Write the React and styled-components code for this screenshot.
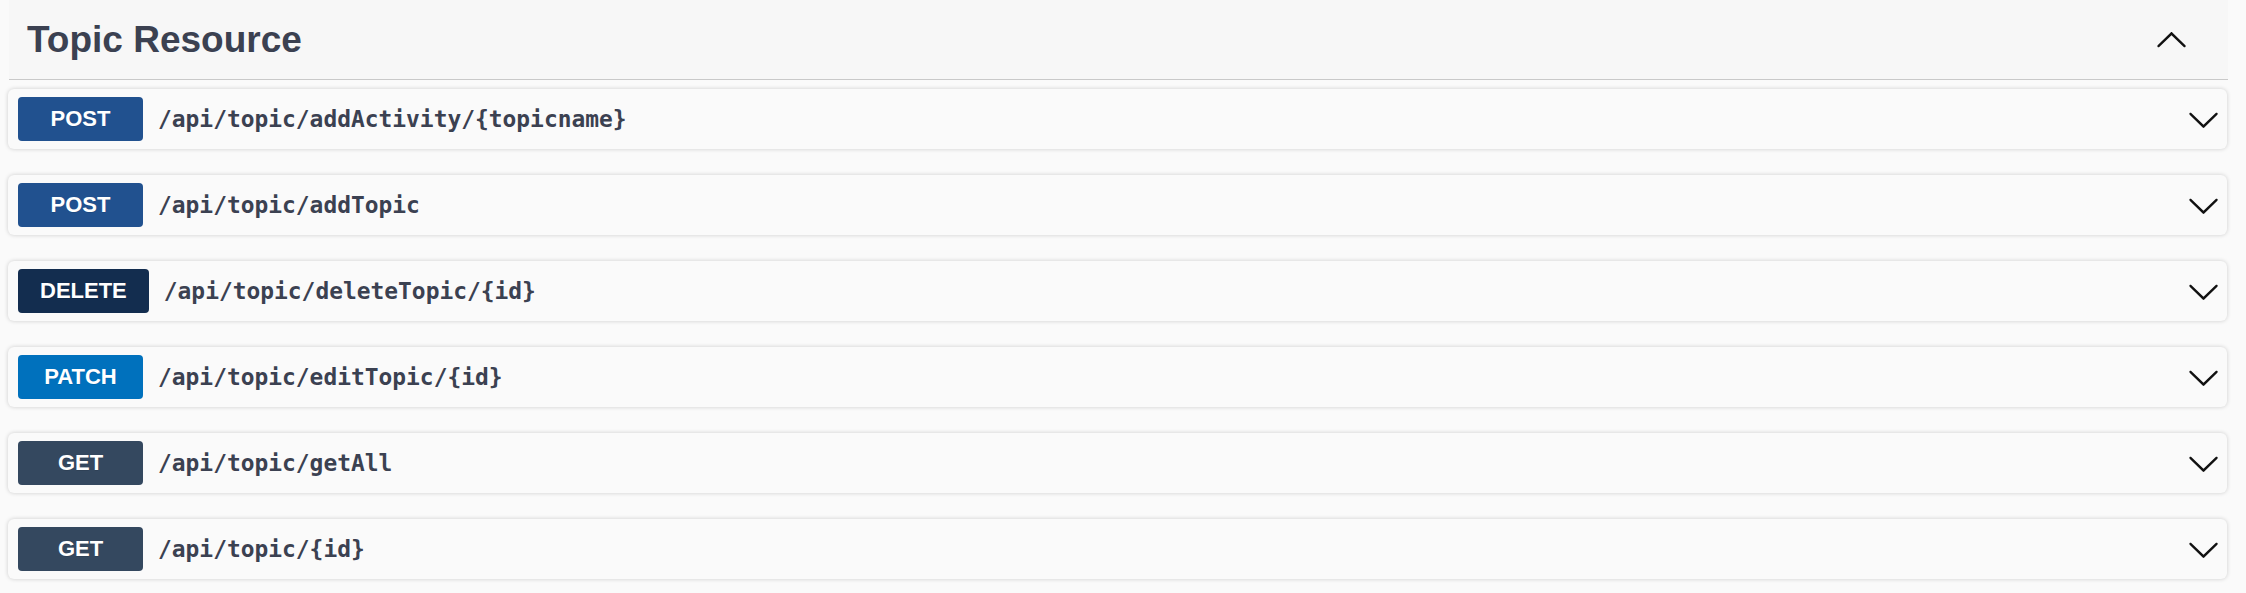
import React from 'react';
import styled, { createGlobalStyle } from 'styled-components';

const GlobalStyle = createGlobalStyle`
  html, body {
    margin: 0;
    padding: 0;
    background: #fafafa;
  }

  body {
    font-family: "Liberation Sans", Arial, sans-serif;
    color: #3b4151;
  }
`;

const methodColors = {
  POST: '#21518f',
  DELETE: '#132d4f',
  PATCH: '#0071bd',
  GET: '#34485f',
};

const StyledSection = styled.div`
  display: flex;
  flex-direction: column;
  padding: 0 19px 0 8px;
`;

const TagHeader = styled.div`
  display: flex;
  flex-direction: row;
  align-items: center;
  justify-content: space-between;
  margin: 0 -1px 0 1px;
  padding: 20px 40px 19px 18px;
  background: #f7f7f7;
  border-bottom: 1px solid #c9c9c9;
`;

const TagTitle = styled.h3`
  margin: 0;
  font-family: "Liberation Sans", Arial, sans-serif;
  font-size: 37px;
  line-height: 40px;
  font-weight: 700;
  color: #3b4151;
`;

const OperationList = styled.div`
  display: flex;
  flex-direction: column;
  gap: 26px;
  padding: 9px 0 14px;
`;

const Operation = styled.div`
  display: flex;
  flex-direction: row;
  align-items: center;
  height: 44px;
  padding: 8px 7px 8px 10px;
  background: #fafafa;
  border-radius: 6px;
  box-shadow: 0 0 4px rgba(0, 0, 0, 0.19);
  cursor: pointer;
`;

const Method = styled.span`
  display: flex;
  align-items: center;
  justify-content: center;
  box-sizing: border-box;
  min-width: 125px;
  height: 44px;
  padding: 0 22px;
  border-radius: 4px;
  background: ${({ $method }) => methodColors[$method]};
  color: #fff;
  font-family: "Liberation Sans", Arial, sans-serif;
  font-size: 22px;
  font-weight: 700;
  text-shadow: 0 1px 0 rgba(0, 0, 0, 0.1);
`;

const Path = styled.span`
  flex: 1;
  padding-left: 15px;
  font-family: "DejaVu Sans Mono", "Liberation Mono", monospace;
  font-size: 22.9px;
  font-weight: 700;
  color: #3b4151;
`;

const Arrow = styled.svg`
  width: 33px;
  height: 33px;
  flex-shrink: 0;
  fill: #111;
  transform: ${({ $up }) => ($up ? 'rotate(180deg)' : 'none')};
`;

const Chevron = ({ up }) => (
  <Arrow $up={up} viewBox='0 0 20 20' aria-hidden='true'>
    <path d='M17.418 6.109c.272-.268.709-.268.979 0s.271.701 0 .969l-7.908 7.83c-.27.268-.707.268-.979 0l-7.908-7.830c-.27-.268-.27-.701 0-.969.271-.268.709-.268.979 0L10 13.25l7.418-7.141z' />
  </Arrow>
);

const operations = [
  { method: 'POST', path: '/api/topic/addActivity/{topicname}' },
  { method: 'POST', path: '/api/topic/addTopic' },
  { method: 'DELETE', path: '/api/topic/deleteTopic/{id}' },
  { method: 'PATCH', path: '/api/topic/editTopic/{id}' },
  { method: 'GET', path: '/api/topic/getAll' },
  { method: 'GET', path: '/api/topic/{id}' },
];

const App = () => (
  <>
    <GlobalStyle />
    <StyledSection>
      <TagHeader>
        <TagTitle>Topic Resource</TagTitle>
        <Chevron up />
      </TagHeader>

      <OperationList>
        {operations.map(({ method, path }) => (
          <Operation key={method + path}>
            <Method $method={method}>{method}</Method>
            <Path>{path}</Path>
            <Chevron />
          </Operation>
        ))}
      </OperationList>
    </StyledSection>
  </>
);

export default App;
